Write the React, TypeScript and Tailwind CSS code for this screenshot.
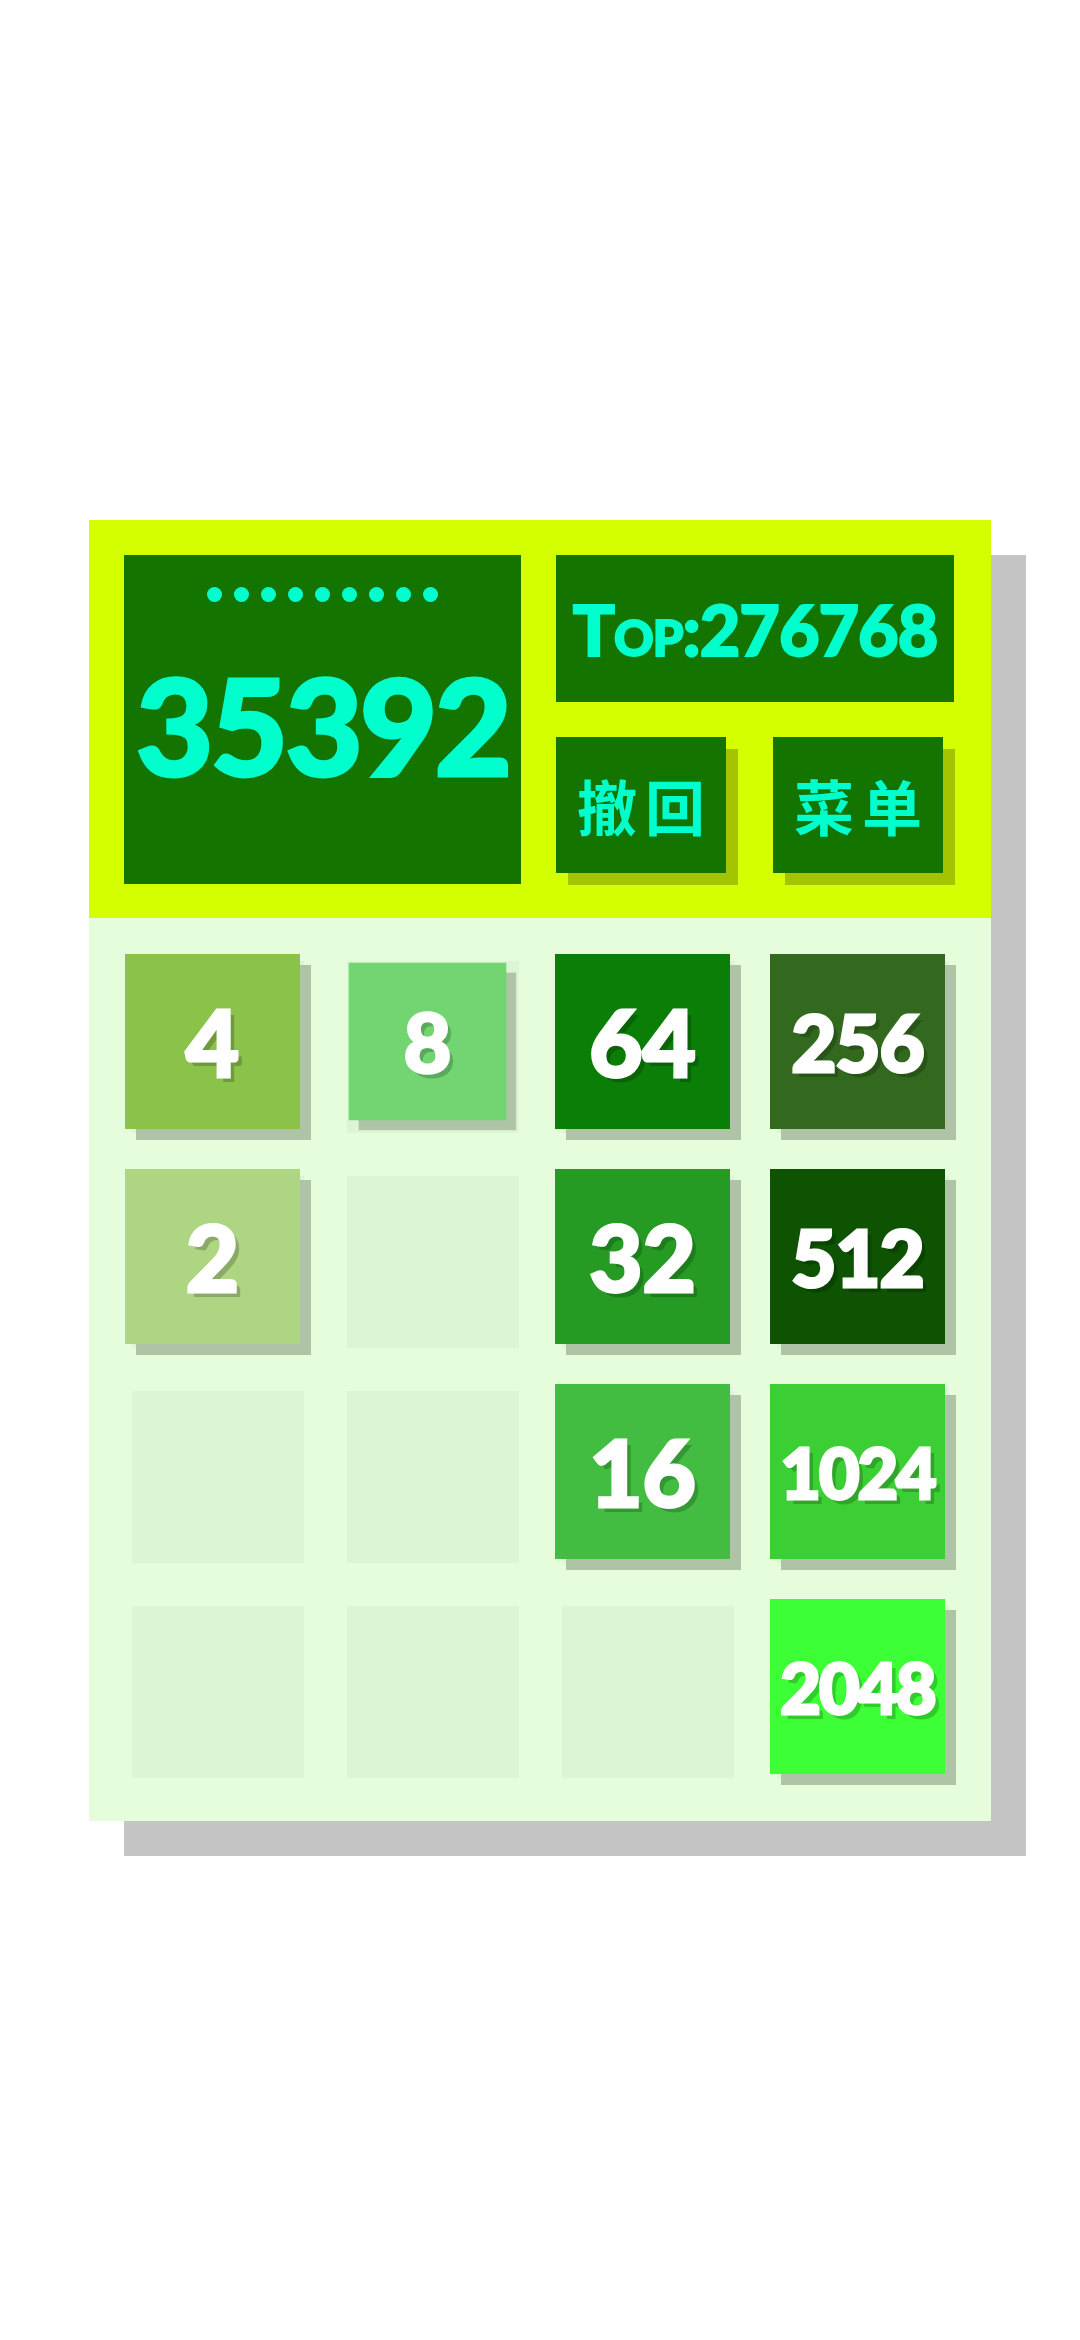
import type { ReactNode } from "react"

const numFont = { fontFamily: "Lato, 'Open Sans', sans-serif" }
const cjkFont = { fontFamily: "'Noto Sans CJK SC', 'Noto Sans', sans-serif" }

// 0 = empty cell
const board = [
  [4, 8, 64, 256],
  [2, 0, 32, 512],
  [0, 0, 16, 1024],
  [0, 0, 0, 2048],
]

const tileBg: Record<number, string> = {
  2: "bg-[#aed581]",
  4: "bg-[#8bc34a]",
  8: "bg-[#72d572]",
  16: "bg-[#42bd41]",
  32: "bg-[#259b24]",
  64: "bg-[#0a7e07]",
  256: "bg-[#33691e]",
  512: "bg-[#0d5302]",
  1024: "bg-[#3ccf35]",
  2048: "bg-[#3dff36]",
}

function textSize(v: number) {
  if (v >= 1000) return "text-[70px] tracking-[-2px]"
  if (v >= 100) return "text-[78px] tracking-[-1px]"
  return "text-[92px]"
}

function Tile({ value, fresh }: { value: number; fresh?: boolean }) {
  return (
    <div
      className={`-ml-[7px] -mt-[7px] w-[175px] h-[175px] flex items-center justify-center shadow-[11px_11px_0_0_#afc3a6] ${tileBg[value]} ${fresh ? "scale-90" : ""}`}
    >
      <span
        className={`font-black text-white leading-none [-webkit-text-stroke:3px_white] [text-shadow:5px_5px_0_rgba(0,0,0,0.2)] ${textSize(value)}`}
        style={numFont}
      >
        {value}
      </span>
    </div>
  )
}

function Button({ children }: { children: ReactNode }) {
  return (
    <button className="w-[170px] h-[136px] bg-[#137400] shadow-[12px_12px_0_0_#a5c400] flex items-center justify-center">
      <span
        className="text-[60px] font-bold leading-none text-[#00ffcc] tracking-[8px] pl-[8px]"
        style={cjkFont}
      >
        {children}
      </span>
    </button>
  )
}

export default function App() {
  return (
    <div className="min-h-[2340px] bg-white pt-[520px] pl-[89px]">
      <div className="w-[902px] shadow-[35px_35px_0_0_#c4c4c4]">
        {/* header */}
        <div className="bg-[#d4ff00] h-[398px] p-[35px] flex gap-[35px]">
          <div className="w-[397px] h-[329px] bg-[#137400] flex flex-col items-center pt-[32px]">
            <div className="flex gap-[12px]">
              {Array.from({ length: 9 }).map((_, i) => (
                <div key={i} className="w-[15px] h-[15px] rounded-full bg-[#00ffcc]" />
              ))}
            </div>
            <div
              className="mt-[56px] text-[134px] font-black leading-none text-[#00ffcc] tracking-[-3px] [-webkit-text-stroke:3px_#00ffcc]"
              style={numFont}
            >
              35392
            </div>
          </div>

          <div className="w-[398px] flex flex-col">
            <div className="h-[147px] bg-[#137400] flex items-center justify-center">
              <span
                className="text-[70px] font-black leading-none text-[#00ffcc] [font-variant:small-caps] tracking-[-1px] [-webkit-text-stroke:2px_#00ffcc]"
                style={numFont}
              >
                Top:276768
              </span>
            </div>
            <div className="mt-[35px] flex gap-[47px]">
              <Button>撤回</Button>
              <Button>菜单</Button>
            </div>
          </div>
        </div>

        {/* board */}
        <div className="bg-[#e6fddc] p-[43px] grid grid-cols-[repeat(4,172px)] gap-[43px]">
          {board.flat().map((v, i) => (
            <div key={i} className="w-[172px] h-[172px] bg-[#dcf5d3]">
              {v > 0 && <Tile value={v} fresh={v === 8} />}
            </div>
          ))}
        </div>
      </div>
    </div>
  )
}
